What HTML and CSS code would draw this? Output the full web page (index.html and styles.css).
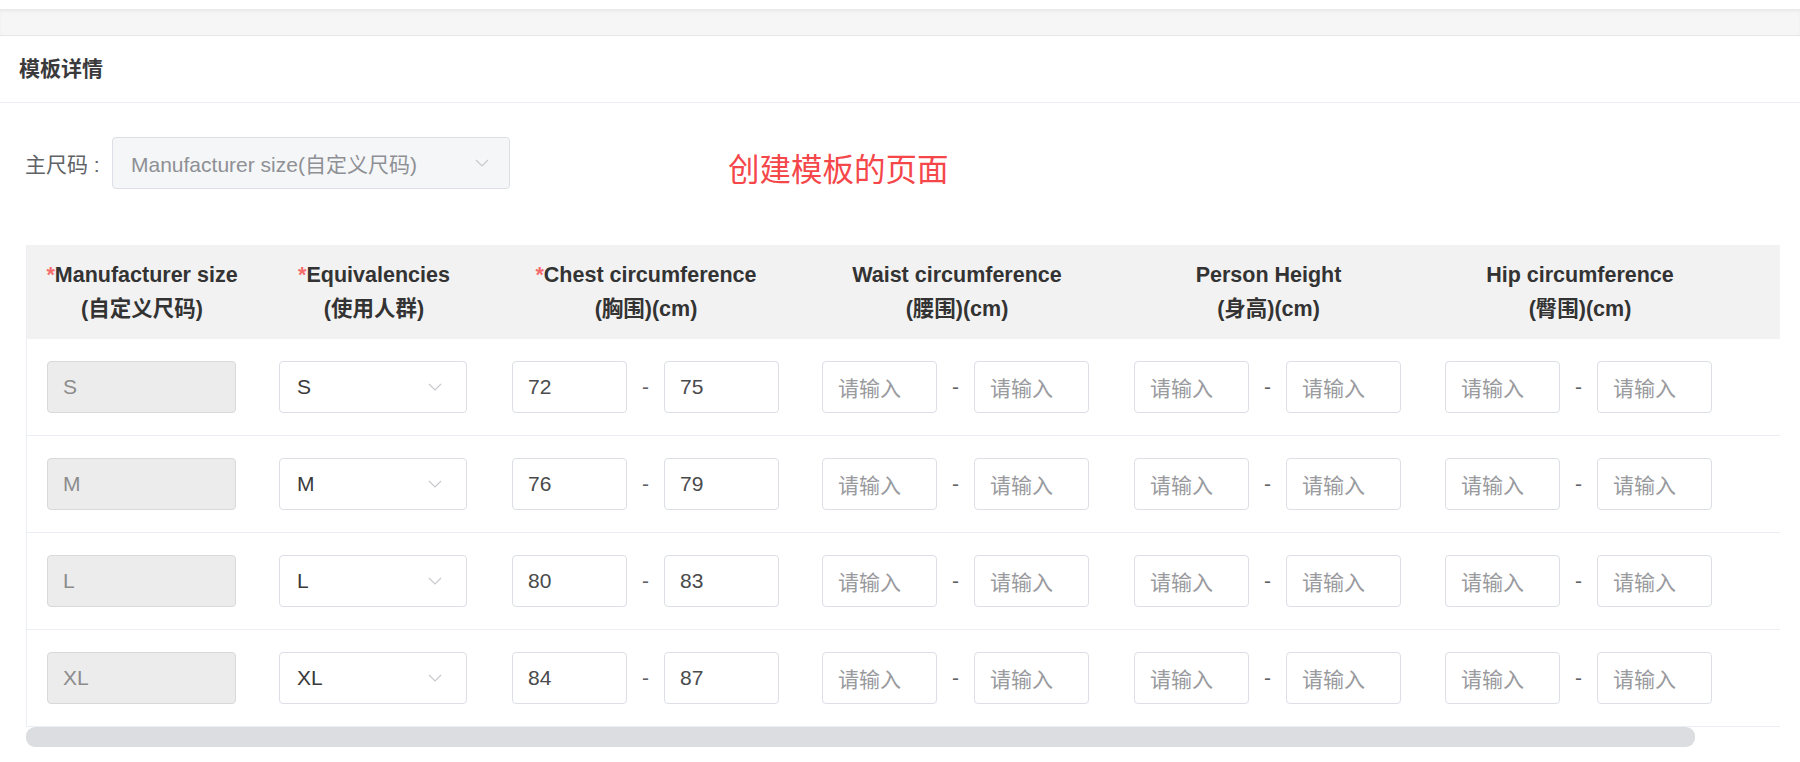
FILE: index.html
```html
<!DOCTYPE html>
<html lang="zh-CN">
<head>
    <meta charset="UTF-8">
    <title>模板详情</title>
    <link rel="stylesheet" href="styles.css">
</head>
<body>
    <div class="topbar"></div>

    <div class="card">
        <div class="card-header">模板详情</div>

        <div class="card-body">
            <div class="form-row">
                <span class="form-label">主尺码 :</span>
                <div class="select select-disabled">
                    <span>Manufacturer size(自定义尺码)</span>
                    <svg class="arrow" width="14" height="8" viewBox="0 0 14 8"><path d="M1 1 L7 7 L13 1" fill="none" stroke="#c8c9cc" stroke-width="1.2"/></svg>
                </div>
                <div class="note">创建模板的页面</div>
            </div>

            <div class="table">
                <div class="th"><span class="req">*</span>Manufacturer size<br>(自定义尺码)</div>
                <div class="th"><span class="req">*</span>Equivalencies<br>(使用人群)</div>
                <div class="th"><span class="req">*</span>Chest circumference<br>(胸围)(cm)</div>
                <div class="th">Waist circumference<br>(腰围)(cm)</div>
                <div class="th">Person Height<br>(身高)(cm)</div>
                <div class="th">Hip circumference<br>(臀围)(cm)</div>
                <div class="th"></div>

                <!-- S -->
                <div class="td"><div class="input input-disabled">S</div></div>
                <div class="td"><div class="select"><span>S</span><svg class="arrow" width="14" height="8" viewBox="0 0 14 8"><path d="M1 1 L7 7 L13 1" fill="none" stroke="#c8c9cc" stroke-width="1.2"/></svg></div></div>
                <div class="td range"><div class="input small">72</div><span class="dash">-</span><div class="input small">75</div></div>
                <div class="td range"><div class="input small ph">请输入</div><span class="dash">-</span><div class="input small ph">请输入</div></div>
                <div class="td range"><div class="input small ph">请输入</div><span class="dash">-</span><div class="input small ph">请输入</div></div>
                <div class="td range"><div class="input small ph">请输入</div><span class="dash">-</span><div class="input small ph">请输入</div></div>
                <div class="td"></div>

                <!-- M -->
                <div class="td"><div class="input input-disabled">M</div></div>
                <div class="td"><div class="select"><span>M</span><svg class="arrow" width="14" height="8" viewBox="0 0 14 8"><path d="M1 1 L7 7 L13 1" fill="none" stroke="#c8c9cc" stroke-width="1.2"/></svg></div></div>
                <div class="td range"><div class="input small">76</div><span class="dash">-</span><div class="input small">79</div></div>
                <div class="td range"><div class="input small ph">请输入</div><span class="dash">-</span><div class="input small ph">请输入</div></div>
                <div class="td range"><div class="input small ph">请输入</div><span class="dash">-</span><div class="input small ph">请输入</div></div>
                <div class="td range"><div class="input small ph">请输入</div><span class="dash">-</span><div class="input small ph">请输入</div></div>
                <div class="td"></div>

                <!-- L -->
                <div class="td"><div class="input input-disabled">L</div></div>
                <div class="td"><div class="select"><span>L</span><svg class="arrow" width="14" height="8" viewBox="0 0 14 8"><path d="M1 1 L7 7 L13 1" fill="none" stroke="#c8c9cc" stroke-width="1.2"/></svg></div></div>
                <div class="td range"><div class="input small">80</div><span class="dash">-</span><div class="input small">83</div></div>
                <div class="td range"><div class="input small ph">请输入</div><span class="dash">-</span><div class="input small ph">请输入</div></div>
                <div class="td range"><div class="input small ph">请输入</div><span class="dash">-</span><div class="input small ph">请输入</div></div>
                <div class="td range"><div class="input small ph">请输入</div><span class="dash">-</span><div class="input small ph">请输入</div></div>
                <div class="td"></div>

                <!-- XL -->
                <div class="td"><div class="input input-disabled">XL</div></div>
                <div class="td"><div class="select"><span>XL</span><svg class="arrow" width="14" height="8" viewBox="0 0 14 8"><path d="M1 1 L7 7 L13 1" fill="none" stroke="#c8c9cc" stroke-width="1.2"/></svg></div></div>
                <div class="td range"><div class="input small">84</div><span class="dash">-</span><div class="input small">87</div></div>
                <div class="td range"><div class="input small ph">请输入</div><span class="dash">-</span><div class="input small ph">请输入</div></div>
                <div class="td range"><div class="input small ph">请输入</div><span class="dash">-</span><div class="input small ph">请输入</div></div>
                <div class="td range"><div class="input small ph">请输入</div><span class="dash">-</span><div class="input small ph">请输入</div></div>
                <div class="td"></div>
            </div>

            <div class="scrollbar"><div class="thumb"></div></div>
        </div>
    </div>
</body>
</html>
```

FILE: styles.css
```css
body {
    margin: 0;
    background: #fff;
    font-family: "Liberation Sans", Arial, "Noto Sans CJK SC", sans-serif;
    font-size: 21px;
    color: #606266;
}
.topbar {
    height: 25px;
    margin-top: 9px;
    background: #f6f6f7;
    border-top: 1px solid #e9e9eb;
    box-shadow: inset 0 2px 3px rgba(0,0,0,0.04);
}
.card {
    background: #fff;
    border-top: 1px solid #e6e6e8;
}
.card-header {
    height: 66px;
    line-height: 66px;
    padding-left: 19px;
    font-size: 21px;
    font-weight: bold;
    color: #3a3a3c;
    border-bottom: 1px solid #ebeef5;
}
.card-body {
    padding: 32px 20px 0 26px;
}
.form-row {
    display: flex;
    align-items: center;
    margin-left: -1px;
}
.form-label {
    width: 87px;
    color: #606266;
}
.select {
    box-sizing: border-box;
    height: 52px;
    width: 188px;
    padding: 0 24px 0 17px;
    border: 1px solid #dcdfe6;
    border-radius: 4px;
    background: #fff;
    display: flex;
    align-items: center;
    justify-content: space-between;
    color: #3a3a3c;
}
.select-disabled {
    width: 398px;
    background: #f5f6f7;
    border-color: #dcdfe6;
    color: #8e9095;
    padding-left: 18px;
    padding-right: 20px;
}
.note {
    margin-left: 218px;
    margin-top: 9px;
    font-size: 31.5px;
    color: #f5474a;
}
.table {
    margin-top: 55px;
    display: grid;
    grid-template-columns: 230px 234px 310px 312px 311px 312px 1fr;
    border-left: 1px solid #ebeef5;
}
.th {
    background: #f2f2f2;
    padding: 13px 0;
    line-height: 34px;
    text-align: center;
    font-weight: bold;
    color: #333;
    font-size: 21.5px;
}
.req {
    color: #f56c6c;
}
.td {
    padding: 22px 0 22px 20px;
    border-bottom: 1px solid #ebeef5;
    display: flex;
    align-items: center;
}
.td:nth-child(7n+2) {
    padding-left: 22px;
}
.range .input:first-child {
    margin-left: 1px;
}
.input {
    box-sizing: border-box;
    height: 52px;
    width: 189px;
    padding: 0 15px;
    border: 1px solid #dcdfe6;
    border-radius: 4px;
    display: flex;
    align-items: center;
    color: #4a4a4c;
}
.input-disabled {
    background: #ececec;
    border-color: #d9d9d9;
    color: #8c8c8c;
}
.input.small {
    width: 115px;
}
.input.ph {
    color: #999a9e;
}
.dash {
    width: 37px;
    text-align: center;
    color: #606266;
}
.scrollbar {
    height: 20px;
}
.thumb {
    width: 1669px;
    height: 20px;
    border-radius: 9px;
    background: #dcdde0;
}
```
